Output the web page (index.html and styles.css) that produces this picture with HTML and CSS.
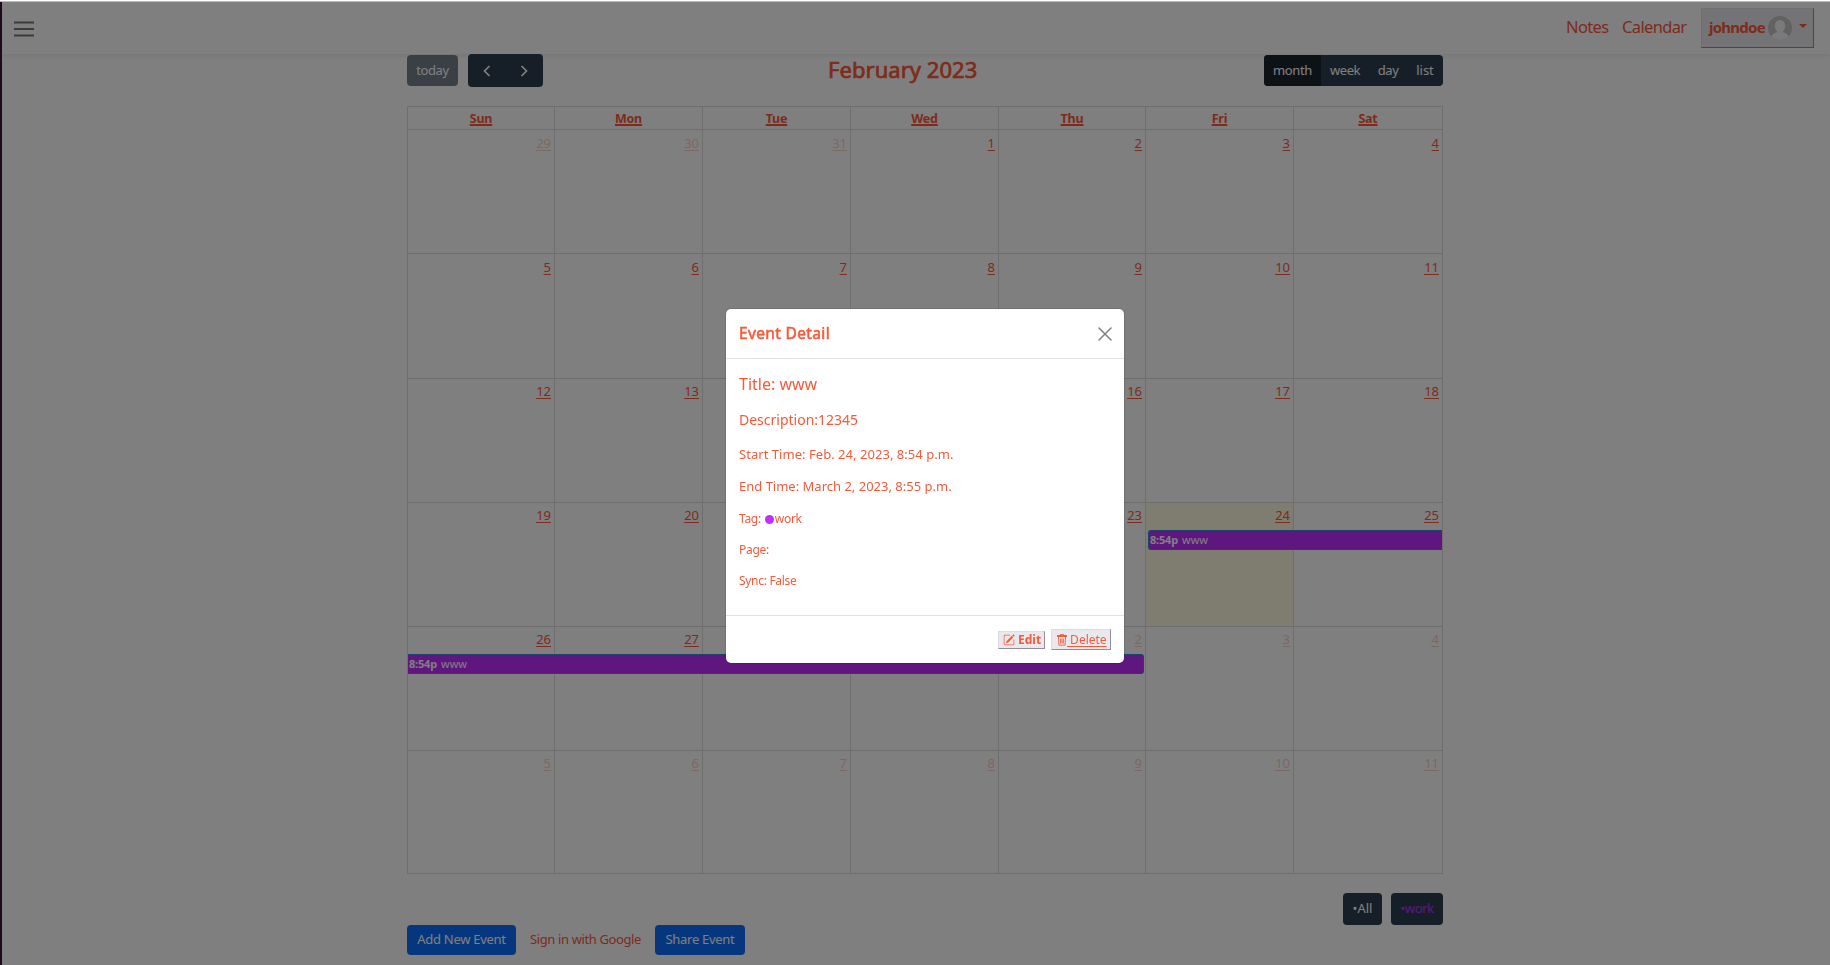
FILE: index.html
```
<!DOCTYPE html>
<html lang="en"><head><meta charset="utf-8"><title>Calendar</title><link rel="stylesheet" href="styles.css"></head>
<body>
<header class="navbar">
<svg class="menu" width="20" height="16" viewBox="0 0 20 16"><path d="M0 1.500h20M0 8h20M0 14.500h20" stroke="#777" stroke-width="1.800"/></svg>
<nav class="links"><a class="notes">Notes</a><a class="cal">Calendar</a>
<button class="user"><span class="uname">johndoe</span><svg class="avatar" width="24" height="24" viewBox="0 0 24 24"><defs><clipPath id="c"><circle cx="12" cy="12" r="12"/></clipPath></defs><g clip-path="url(#c)"><path fill="#c4c4c4" d="M0 0h24v24H0z"/><ellipse cx="12" cy="10" rx="5.300" ry="6" fill="#f4f4f4"/><path d="M9 14h6v2.300q5 1 6 5.700V24H3v-2q1-4.700 6-5.700z" fill="#f4f4f4"/></g></svg><i class="caret"></i></button></nav>
</header>
<main class="page">
<div class="toolbar">
<div class="left"><button class="btn today"><span>today</span></button><div class="arrows"><svg width="8" height="12" viewBox="0 0 8 12"><path d="M6.500 1L1.500 6l5 5"/></svg><svg width="8" height="12" viewBox="0 0 8 12"><path d="M1.500 1l5 5-5 5"/></svg></div></div>
<h2><span>February 2023</span></h2>
<div class="views"><button class="v1 on"><span>month</span></button><button class="v2"><span>week</span></button><button class="v3"><span>day</span></button><button class="v4"><span>list</span></button></div>
</div>
<div class="grid">
<div class="th"><a>Sun</a></div><div class="th"><a>Mon</a></div><div class="th"><a>Tue</a></div><div class="th"><a>Wed</a></div><div class="th"><a>Thu</a></div><div class="th"><a>Fri</a></div><div class="th"><a>Sat</a></div>
<div class="d o"><a>29</a></div><div class="d o"><a>30</a></div><div class="d o"><a>31</a></div><div class="d"><a>1</a></div><div class="d"><a>2</a></div><div class="d"><a>3</a></div><div class="d"><a>4</a></div>
<div class="d"><a>5</a></div><div class="d"><a>6</a></div><div class="d"><a>7</a></div><div class="d"><a>8</a></div><div class="d"><a>9</a></div><div class="d"><a>10</a></div><div class="d"><a>11</a></div>
<div class="d"><a>12</a></div><div class="d"><a>13</a></div><div class="d"><a>14</a></div><div class="d"><a>15</a></div><div class="d"><a>16</a></div><div class="d"><a>17</a></div><div class="d"><a>18</a></div>
<div class="d"><a>19</a></div><div class="d"><a>20</a></div><div class="d"><a>21</a></div><div class="d"><a>22</a></div><div class="d"><a>23</a></div><div class="d now"><a>24</a><div class="ev e1"><b>8:54p</b><span>www</span></div></div><div class="d"><a>25</a></div>
<div class="d"><a>26</a><div class="ev e2"><b>8:54p</b><span>www</span></div></div><div class="d"><a>27</a></div><div class="d"><a>28</a></div><div class="d o"><a>1</a></div><div class="d o"><a>2</a></div><div class="d o"><a>3</a></div><div class="d o"><a>4</a></div>
<div class="d o"><a>5</a></div><div class="d o"><a>6</a></div><div class="d o"><a>7</a></div><div class="d o"><a>8</a></div><div class="d o"><a>9</a></div><div class="d o"><a>10</a></div><div class="d o"><a>11</a></div>
</div>
<div class="tags"><button class="t1"><span>•All</span></button><button class="t2"><span>•work</span></button></div>
<div class="actions"><button class="add"><span>Add New Event</span></button><a class="google">Sign in with Google</a><button class="share"><span>Share Event</span></button></div>
</main>
<div class="backdrop"></div>
<section class="modal">
<div class="mh"><h5>Event Detail</h5><svg width="14" height="14" viewBox="0 0 14 14"><path d="M1 1l12 12M13 1L1 13" stroke="#808080" stroke-width="1.500" stroke-linecap="round"/></svg></div>
<div class="mb"><p class="p1"><span>Title: www</span></p><p class="p2"><span>Description:12345</span></p><p class="p3"><span>Start Time: Feb. 24, 2023, 8:54 p.m.</span></p><p class="p4"><span>End Time: March 2, 2023, 8:55 p.m.</span></p><p class="p5"><span>Tag:</span><i></i><span>work</span></p><p class="p6"><span>Page:</span></p><p class="p7"><span>Sync: False</span></p></div>
<div class="mf"><button class="edit"><svg width="12" height="12" viewBox="0 0 16 16" fill="#fa5838"><path d="M15.500 1.940a.5.5 0 0 1 0 .706L14.460 3.690l-2-2L13.500.646a.5.5 0 0 1 .707 0l1.293 1.293zm-1.750 2.456-2-2L4.940 9.210a.5.5 0 0 0-.121.196l-.805 2.414a.25.25 0 0 0 .316.316l2.414-.805a.5.5 0 0 0 .196-.120l6.810-6.820z"/><path d="M1 13.500A1.500 1.500 0 0 0 2.500 15h11a1.500 1.500 0 0 0 1.500-1.500v-6a.5.5 0 0 0-1 0v6a.5.5 0 0 1-.5.5h-11a.5.5 0 0 1-.5-.5v-11a.5.5 0 0 1 .5-.5H9a.5.5 0 0 0 0-1H2.500A1.500 1.500 0 0 0 1 2.500v11z"/></svg><span>Edit</span></button><button class="del"><svg width="10" height="12" viewBox="0 0 10 12"><path d="M3.300 1V.6h3.400V1M1.500 3l.4 8.200h6.200L8.500 3M3.600 4.500v5M5 4.500v5M6.400 4.500v5" fill="none" stroke="#fa5838" stroke-width=".9"/><path d="M0 1h10v2H0z" fill="#fa5838"/></svg><span>&nbsp;Delete</span></button></div>
</section>
<i class="edge-left"></i><i class="edge-top"></i>
</body></html>
```
FILE: styles.css
```
*{box-sizing:border-box}
body{margin:0;height:965px;overflow:hidden;background:#fff;color:#fa5838;font-family:"Noto Sans",sans-serif;font-size:14px}
button{margin:0;padding:0;border:0;font-family:inherit;color:inherit}
svg{display:block;flex:none}
.navbar{height:54px;padding:2px 16px 0 14px;display:flex;justify-content:space-between;align-items:center;box-shadow:0 2px 4px rgba(0,0,0,.08);position:relative}
.menu{margin-top:2px}
.links{display:flex;align-items:center;font-size:16.500px;line-height:24px;white-space:nowrap}
.links>a{padding-bottom:3px;letter-spacing:-.650px}
.notes{width:56px}.cal{width:79px}
.user{width:113px;height:40px;display:flex;align-items:center;padding-left:7px;background:#e9e9ed;border:1px solid #e0e0e4;border-right-color:#8f8f9d;border-bottom-color:#8f8f9d;font-size:15px;font-weight:700}
.uname{width:59px;text-align:left;letter-spacing:-.750px;padding-bottom:3px;line-height:20px}
.caret{margin-left:7px;margin-top:-4px;border:4px solid transparent;border-top-color:#fa5838;border-bottom:0}
.page{width:1036px;margin:0 0 0 407px}
.toolbar{height:52px;display:flex;justify-content:space-between;align-items:flex-start;position:relative}
.left{display:flex;gap:10px}
.today{margin-top:1px;width:51px;height:31px;border-radius:4px;background:#2c3e50;color:#fff;opacity:.65;font-size:13px;letter-spacing:-.400px;padding-bottom:2px}
.arrows{width:75px;height:33px;border-radius:4px;background:#2c3e50;display:flex;align-items:center;justify-content:space-between;padding:1px 15px 0 15px}
.arrows svg{fill:none;stroke:#fff;stroke-width:1.700}
h2{margin:0;position:absolute;left:421px;top:1px;font-size:22px;line-height:28px;font-weight:400;letter-spacing:.050px;-webkit-text-stroke:.7px #fa5838;white-space:nowrap}
.views{margin-top:1px;width:179px;height:31px;display:flex;background:#2c3e50;border-radius:4px;overflow:hidden}
.views button{background:none;color:#fff;font-size:13px;letter-spacing:-.400px;padding-bottom:2px}
.v1{width:57px}.v2{width:48px}.v3{width:38px}.v4{width:36px}
.views .v4{letter-spacing:0}
.views .on{background:#1a252f}
.grid{display:grid;grid-template-columns:147px 148px 148px 148px 147px 148px 150px;grid-template-rows:23px 124px 125px 124px 124px 124px 124px}
.th,.d{border-left:1px solid #ddd;border-top:1px solid #ddd}
.grid>:nth-child(7n){border-right:1px solid #ddd}
.grid>:nth-child(n+43){border-bottom:1px solid #ddd}
.th{text-align:center;font-size:12.500px;font-weight:700;line-height:24px;letter-spacing:-.200px;text-decoration:underline;text-decoration-thickness:2px;text-underline-offset:1px}
.d{position:relative;padding:4px 3px 0 0;text-align:right;font-size:13px;line-height:18px}
.grid>:nth-child(n+22){padding-top:3px}
.d>a{text-decoration:underline;text-underline-offset:2px}
.o>a{opacity:.3}
.now{background:#fffadf}
.ev{position:absolute;z-index:1;top:27px;height:20px;display:flex;align-items:center;background:#bf2fff;border:1px solid #3788d8;color:#fff;font-size:11px;line-height:18px}
.ev b{width:32px;text-align:left;letter-spacing:-.200px}
.e1{left:2px;width:294px;border-right:0;border-radius:3px 0 0 3px;padding-left:1px}
.e2{left:0;width:736px;border-left:0;border-radius:0 3px 3px 0;padding-left:1px}
.tags{margin-top:19px;display:flex;justify-content:flex-end;gap:9px}
.tags button{height:32px;border-radius:4px;background:#2c3e50;color:#fff;font-size:13px;padding-bottom:2px}
.t1{width:39px}.t2{width:52px}.tags .t2{color:#bf2fff;letter-spacing:-.400px}
.actions{display:flex;align-items:center;height:30px}
.actions button{height:30px;border-radius:4px;background:#0d6efd;color:#fff;font-size:13px;letter-spacing:-.280px;padding-bottom:2px}
.add{width:109px}.google{width:139px;padding:0 0 2px 14px;font-size:13px;letter-spacing:-.380px}.share{width:90px}
.backdrop{position:fixed;inset:0;background:rgba(0,0,0,.5);z-index:5}
.modal{position:fixed;z-index:6;left:726px;top:309px;width:398px;height:354px;background:#fff;border-radius:5px;box-shadow:0 0 0 1px rgba(0,0,0,.1)}
.mh{height:50px;padding:0 12px 0 13px;display:flex;align-items:center;justify-content:space-between;border-bottom:1px solid #dee2e6}
h5{margin:0;font-size:15.500px;font-weight:400;letter-spacing:.350px;-webkit-text-stroke:.55px #fa5838;line-height:20px;padding-bottom:2px}
.mb{height:256px;padding:7px 13px 0}
.mb p{margin:0;line-height:20px;display:flex;align-items:center;white-space:nowrap}
.p1{font-size:16px;height:36px}.p2{font-size:14px;height:36px}.p3{font-size:13px;height:31px;letter-spacing:.040px}.p4{font-size:13px;height:34px}.p5,.p6,.p7{font-size:12px;height:31px;letter-spacing:-.300px}
.p5 i{width:9px;height:9px;border-radius:50%;background:#bf2fff;margin:1px 1px 0 4px}
.mf{height:48px;border-top:1px solid #dee2e6;display:flex;align-items:center;justify-content:flex-end;gap:6px;padding-right:13px}
.mf button{display:flex;align-items:center;background:#e9e9ed;border:1px solid #ddd;border-right:1px solid #8f8f9d;border-bottom:1px solid #8f8f9d;font-size:12px;line-height:16px;white-space:nowrap}
.mf .edit{width:47px;height:18px;font-weight:700;padding-left:4px;gap:3px}
.mf .del{width:60px;height:21px;padding-left:5px}
.del span{text-decoration:underline;text-underline-offset:2px}
.edge-left{position:fixed;z-index:9;left:0;top:2px;width:2px;bottom:0;background:#1f0a1b}
.edge-top{position:fixed;z-index:9;left:0;top:0;right:0;height:2px;background:#fff;border-bottom:1px solid #bbb}
```
